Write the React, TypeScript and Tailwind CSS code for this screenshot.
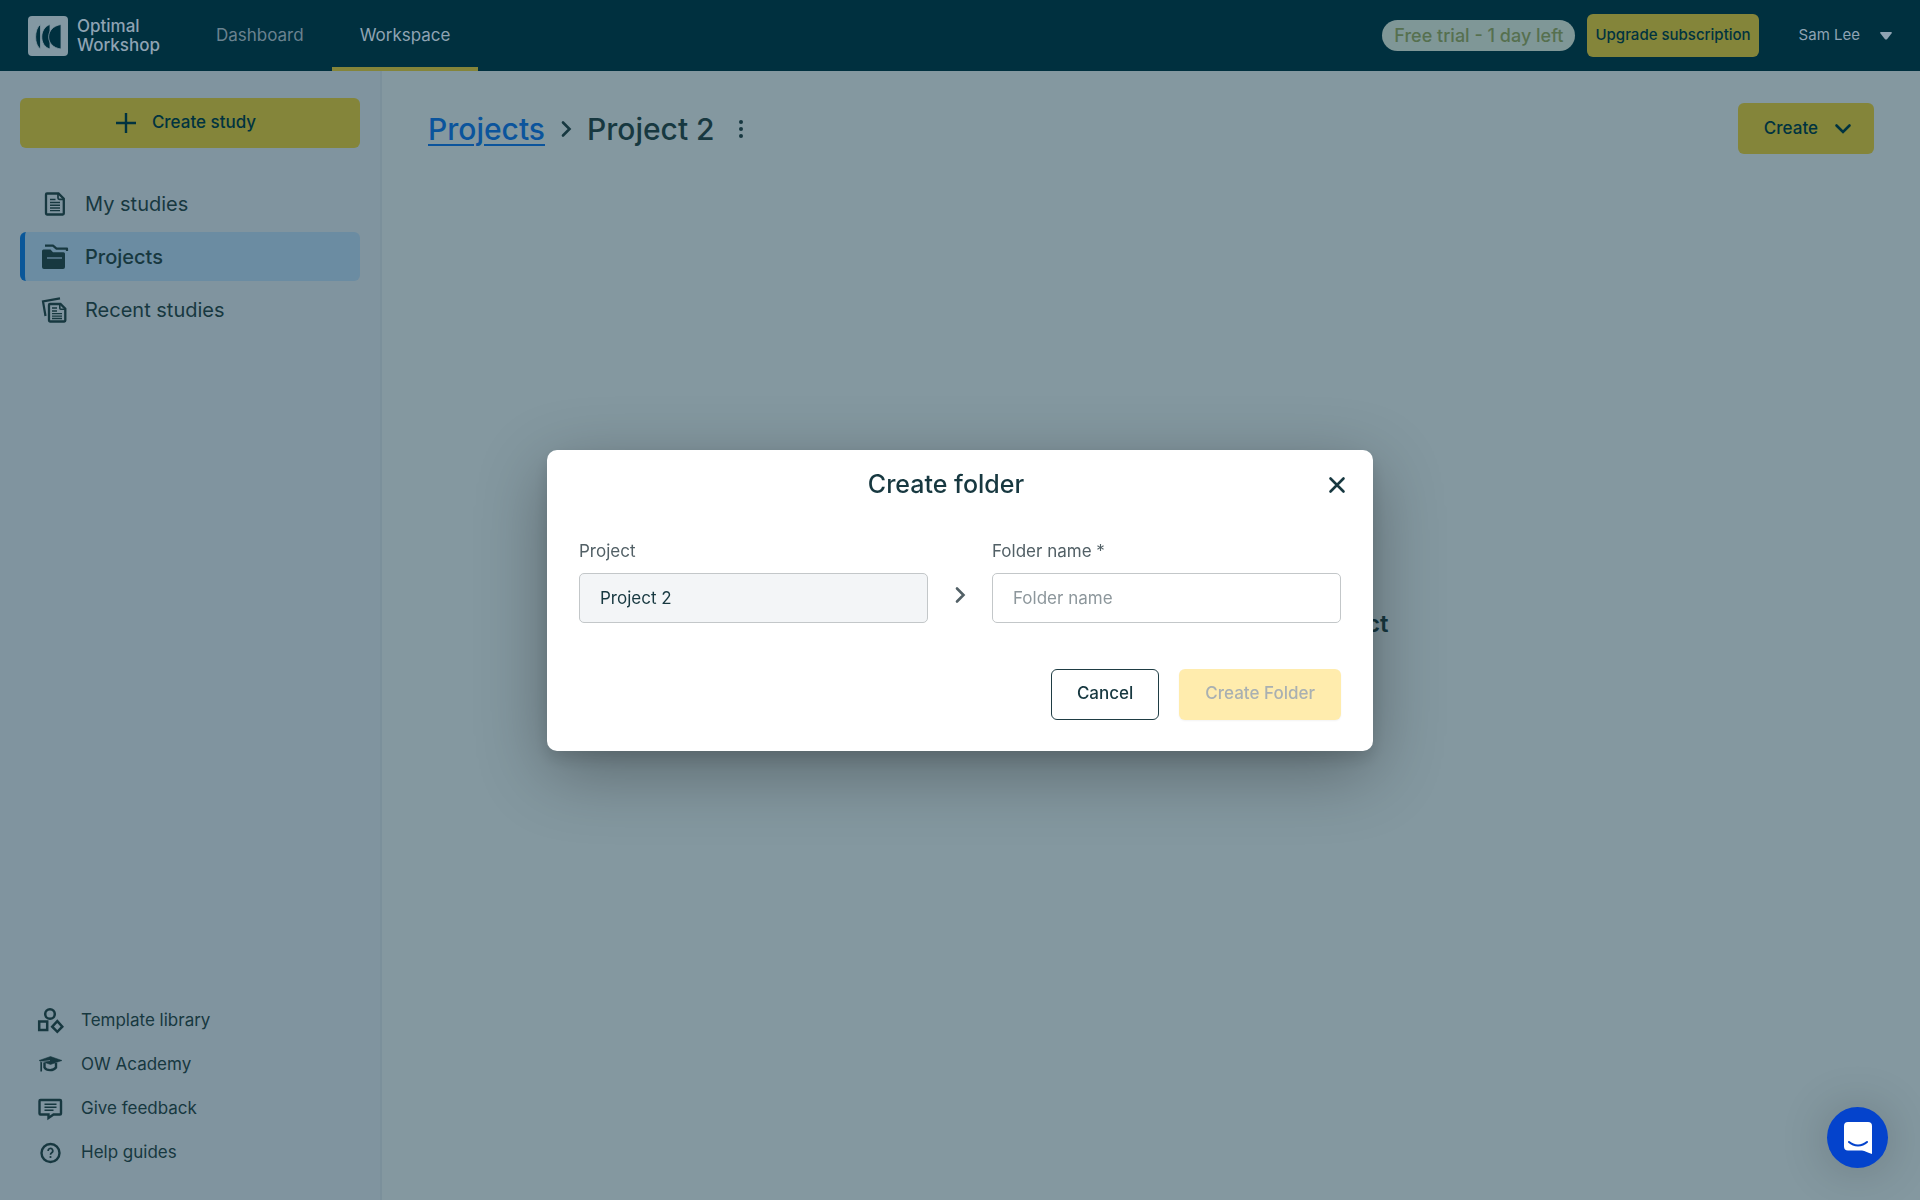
import type { ReactNode } from 'react';

interface NavItemProps {
  icon: ReactNode;
  label: string;
  active?: boolean;
}

function Logo() {
  return (
    <svg width="40" height="40" viewBox="0 0 40 40" aria-hidden="true">
      <rect width="40" height="40" rx="4" fill="#8398a3" />
      <g fill="#00303f" stroke="#8398a3" strokeWidth="0.800">
        <path d="M12.500 8.500C6 13 6 29 12.500 33Z" />
        <path d="M22 8.500C11 12 11 30 22 33Z" />
        <path d="M33 8.500C16.500 11 16.500 31 33 33Z" />
      </g>
    </svg>
  );
}

function DocIcon() {
  return (
    <svg width="28" height="28" viewBox="0 0 28 28" fill="none" stroke="currentColor" aria-hidden="true">
      <path d="M6 3.500H17.500L22.800 8.800V23.500A1 1 0 0 1 21.800 24.500H6A1 1 0 0 1 5 23.500V4.500A1 1 0 0 1 6 3.500Z" strokeWidth="2.300" />
      <path d="M17 3.500V8A1.300 1.300 0 0 0 18.300 9.300H22.500" strokeWidth="1.700" />
      <path d="M9 9.500H14.500M9 12.500H19M9 15.300H19M9 18H19M9 20.600H19" strokeWidth="1.400" />
    </svg>
  );
}

function FoldersIcon() {
  return (
    <svg width="28" height="28" viewBox="0 0 28 28" fill="none" aria-hidden="true">
      <path d="M4 2.700H12L15.500 5.700H26V8" stroke="currentColor" strokeWidth="2.200" strokeLinejoin="round" />
      <path d="M1 8A1.500 1.500 0 0 1 2.500 6.500H9.500L12 9.200H22.500A1.500 1.500 0 0 1 24 10.700V24A2 2 0 0 1 22 26H3A2 2 0 0 1 1 24Z" fill="currentColor" />
      <path d="M6 15H21" stroke="#6b8ca2" strokeWidth="1.300" />
    </svg>
  );
}

function RecentIcon() {
  return (
    <svg width="28" height="28" viewBox="0 0 28 28" fill="none" stroke="currentColor" aria-hidden="true">
      <path d="M4.500 20L2 5.500L19 2.300" strokeWidth="2.200" />
      <path d="M9 8H19.500L24.300 12.800V24.500A1 1 0 0 1 23.300 25.500H9A1 1 0 0 1 8 24.500V9A1 1 0 0 1 9 8Z" strokeWidth="2.300" />
      <path d="M18.800 8V12.300A1 1 0 0 0 19.800 13.300H24" strokeWidth="1.600" />
      <path d="M11 12H16M11 15H16M11 17.600H21M11 20.100H21M11 22.500H21" strokeWidth="1.300" />
    </svg>
  );
}

function ShapesIcon() {
  return (
    <svg width="28" height="28" viewBox="0 0 28 28" fill="none" stroke="currentColor" strokeWidth="2.500" aria-hidden="true">
      <circle cx="14" cy="7" r="4.800" />
      <rect x="3.200" y="14.500" width="8" height="8.500" />
      <path d="M21.300 14.200L26.300 19.700L21.300 24.800L16.200 19.700Z" />
    </svg>
  );
}

function AcademyIcon() {
  return (
    <svg width="28" height="28" viewBox="0 0 28 28" fill="none" stroke="currentColor" aria-hidden="true">
      <path d="M3 9.500L14.500 5.500L26 9.500L14.500 13.500Z" fill="currentColor" strokeWidth="0.500" />
      <path d="M8.500 12V16.500C10.500 20 17.500 20 20 16.500V12" strokeWidth="2.400" />
      <path d="M5.200 10.500V20.500" strokeWidth="1.700" />
      <path d="M5 10.800L14 9.500" stroke="#80949f" strokeWidth="0.700" />
    </svg>
  );
}

function FeedbackIcon() {
  return (
    <svg width="28" height="28" viewBox="0 0 28 28" fill="none" stroke="currentColor" aria-hidden="true">
      <path d="M4.500 5H24A1 1 0 0 1 25 6V18.500A1 1 0 0 1 24 19.500H17.500L12.500 23V19.500H4.500A1 1 0 0 1 3.500 18.500V6A1 1 0 0 1 4.500 5Z" strokeWidth="2.400" />
      <path d="M8.500 9.300H20.500M8.500 12.300H20.500M8.500 15.300H17.500" strokeWidth="1.500" />
    </svg>
  );
}

function HelpIcon() {
  return (
    <svg width="28" height="28" viewBox="0 0 28 28" fill="none" stroke="currentColor" aria-hidden="true">
      <circle cx="14.500" cy="14" r="9" strokeWidth="2.400" />
      <path d="M12.200 12A2.300 2.300 0 1 1 15.700 13.700C14.800 14.300 14.500 14.800 14.500 15.800" strokeWidth="1.700" />
      <circle cx="14.500" cy="18" r="1.100" fill="currentColor" stroke="none" />
    </svg>
  );
}

function Chevron() {
  return (
    <svg width="12" height="18" viewBox="0 0 12 18" fill="none" stroke="currentColor" strokeWidth="2.600" strokeLinecap="round" aria-hidden="true">
      <path d="M3 2.500L9.500 9L3 15.500" />
    </svg>
  );
}

function NavItem({ icon, label, active }: NavItemProps) {
  return (
    <a
      href="#"
      className={`flex h-[49px] items-center gap-4 rounded-md border-l-[5px] pl-4 text-xl ${
        active ? 'border-[#0a5799] bg-[#6b8ca2] font-medium' : 'border-transparent'
      }`}
    >
      {icon}
      {label}
    </a>
  );
}

function HelpItem({ icon, label }: NavItemProps) {
  return (
    <a href="#" className="flex h-11 items-center gap-[17px] text-[17px]">
      {icon}
      {label}
    </a>
  );
}

function Header() {
  return (
    <header className="flex h-[71px] items-center justify-between bg-[#00303f] px-7 text-[#8fa3b3]">
      <div className="flex h-full items-center">
        <a href="#" className="flex items-center gap-[9px] text-[17px] leading-[19px] font-medium">
          <Logo />
          <span>
            Optimal
            <br />
            Workshop
          </span>
        </a>
        <nav className="ml-7 flex h-full text-[17px]">
          <a href="#" className="flex h-full items-center border-b-4 border-transparent px-7 pt-[5px] text-[#6a828f]">
            Dashboard
          </a>
          <a href="#" className="flex h-full items-center border-b-4 border-[#84853a] px-7 pt-[5px]">
            Workspace
          </a>
        </nav>
      </div>
      <div className="flex items-center">
        <span className="flex h-[31px] items-center rounded-full bg-[#7f9797] px-3 text-lg font-medium text-[#56704f]">
          Free trial - 1 day left
        </span>
        <button type="button" className="ml-3 h-[43px] rounded-md bg-[#84853a] px-2 text-[15px] font-medium text-[#003340]">
          Upgrade subscription
        </button>
        <button type="button" className="ml-10 flex items-center gap-5 text-[15px]">
          Sam Lee
          <svg width="12" height="8" viewBox="0 0 12 8" fill="currentColor" aria-hidden="true">
            <path d="M1 0H11Q12.500 0 11.500 1.500L7 7.200Q6 8 5 7.200L0.500 1.500Q-0.500 0 1 0Z" />
          </svg>
        </button>
      </div>
    </header>
  );
}

function Sidebar() {
  return (
    <aside className="flex w-[382px] shrink-0 flex-col border-r-2 border-[#7b909b] bg-[#80949f] px-5 pt-[27px] pb-[25px]">
      <button type="button" className="flex h-[50px] items-center justify-center gap-4 rounded-md bg-[#84853a] pr-2 text-[17px] font-medium text-[#003340]">
        <svg width="20" height="20" viewBox="0 0 20 20" stroke="currentColor" strokeWidth="2.400" aria-hidden="true">
          <path d="M10 0V20M0 10H20" />
        </svg>
        Create study
      </button>
      <nav className="mt-[31px] flex flex-col gap-1">
        <NavItem icon={<DocIcon />} label="My studies" />
        <NavItem icon={<FoldersIcon />} label="Projects" active />
        <NavItem icon={<RecentIcon />} label="Recent studies" />
      </nav>
      <nav className="mt-auto flex flex-col pl-4">
        <HelpItem icon={<ShapesIcon />} label="Template library" />
        <HelpItem icon={<AcademyIcon />} label="OW Academy" />
        <HelpItem icon={<FeedbackIcon />} label="Give feedback" />
        <HelpItem icon={<HelpIcon />} label="Help guides" />
      </nav>
    </aside>
  );
}

function Workspace() {
  return (
    <main className="flex flex-1 flex-col">
      <div className="flex items-center justify-between px-[46px] pt-8">
        <div className="flex items-center gap-[15px] text-3xl font-medium">
          <a href="#" className="text-[#0b549c] underline decoration-2 underline-offset-4">
            Projects
          </a>
          <Chevron />
          <h1>Project 2</h1>
          <button type="button" aria-label="Project options" className="px-2">
            <svg width="6" height="20" viewBox="0 0 6 20" fill="currentColor" aria-hidden="true">
              <circle cx="3" cy="3" r="2" />
              <circle cx="3" cy="10" r="2" />
              <circle cx="3" cy="17" r="2" />
            </svg>
          </button>
        </div>
        <button type="button" className="flex h-[51px] items-center gap-4 rounded-md bg-[#84853a] pr-[22px] pl-[26px] text-[17px] font-medium text-[#003340]">
          Create
          <svg width="18" height="12" viewBox="0 0 18 12" fill="none" stroke="currentColor" strokeWidth="2.600" strokeLinecap="round" aria-hidden="true">
            <path d="M2.500 2.500L9 9L15.500 2.500" />
          </svg>
        </button>
      </div>
      <div className="flex flex-1 justify-center pt-[454px]">
        <h2 className="text-2xl font-semibold">You don't have any studies in this project</h2>
      </div>
    </main>
  );
}

function CreateFolderDialog() {
  return (
    <div className="fixed inset-0 flex items-center justify-center">
      <form
        role="dialog"
        aria-labelledby="dialog-title"
        className="w-[826px] rounded-[10px] bg-white px-8 pt-[15px] pb-[31px] shadow-[0_20px_70px_rgba(0,0,0,0.32),0_8px_16px_rgba(0,0,0,0.12)]"
      >
        <div className="flex h-10 items-center gap-1">
          <h2 id="dialog-title" className="flex-1 text-center text-[25px] font-medium">
            Create folder
          </h2>
          <button type="button" aria-label="Close" className="-mr-4 p-2">
            <svg width="24" height="24" viewBox="0 0 24 24" fill="none" stroke="currentColor" strokeWidth="2.600" strokeLinecap="round" aria-hidden="true">
              <path d="M5.500 5.500L18.500 18.500M18.500 5.500L5.500 18.500" />
            </svg>
          </button>
        </div>
        <div className="mt-8 flex items-end text-[17px] leading-7">
          <div className="flex flex-1 flex-col gap-2">
            <label htmlFor="project" className="text-[#526066]">Project</label>
            <input id="project" readOnly value="Project 2" className="h-[50px] w-full rounded-[5px] border border-[#c3c7c9] bg-[#f3f5f7] px-5" />
          </div>
          <div className="flex h-14 w-16 items-center justify-center text-[#526066]">
            <Chevron />
          </div>
          <div className="flex flex-1 flex-col gap-2">
            <label htmlFor="folder-name" className="text-[#526066]">Folder name *</label>
            <input id="folder-name" placeholder="Folder name" className="h-[50px] w-full rounded-[5px] border border-[#c3c7c9] px-5 placeholder:text-[#8d979c]" />
          </div>
        </div>
        <div className="mt-[46px] flex justify-end gap-5 text-[17px] font-medium">
          <button type="button" className="h-[51px] rounded-md border border-[#1f3d44] px-[25px]">
            Cancel
          </button>
          <button type="submit" disabled className="h-[51px] rounded-md bg-[#ffecad] px-[26px] text-[#a9b0b2] shadow-xs">
            Create Folder
          </button>
        </div>
      </form>
    </div>
  );
}

export default function App() {
  return (
    <div className="flex min-h-screen flex-col bg-[#8498a0] font-['Inter',sans-serif] text-[#173840]">
      <Header />
      <div className="flex flex-1">
        <Sidebar />
        <Workspace />
      </div>
      <CreateFolderDialog />
      <button
        type="button"
        aria-label="Open chat"
        className="fixed right-8 bottom-8 flex size-[61px] items-center justify-center rounded-full bg-[#0443cc] shadow-[0_2px_50px_rgba(0,0,0,0.2)]"
      >
        <svg width="28" height="32" viewBox="0 0 28 32" fill="none" aria-hidden="true">
          <path d="M4 0H24A4 4 0 0 1 28 4V32C24 31 21 29 18 28.500H4A4 4 0 0 1 0 24.500V4A4 4 0 0 1 4 0Z" fill="#fff" />
          <path d="M5 20C10 24.500 18 24.500 23 20" stroke="#0443cc" strokeWidth="2" strokeLinecap="round" />
        </svg>
      </button>
    </div>
  );
}
